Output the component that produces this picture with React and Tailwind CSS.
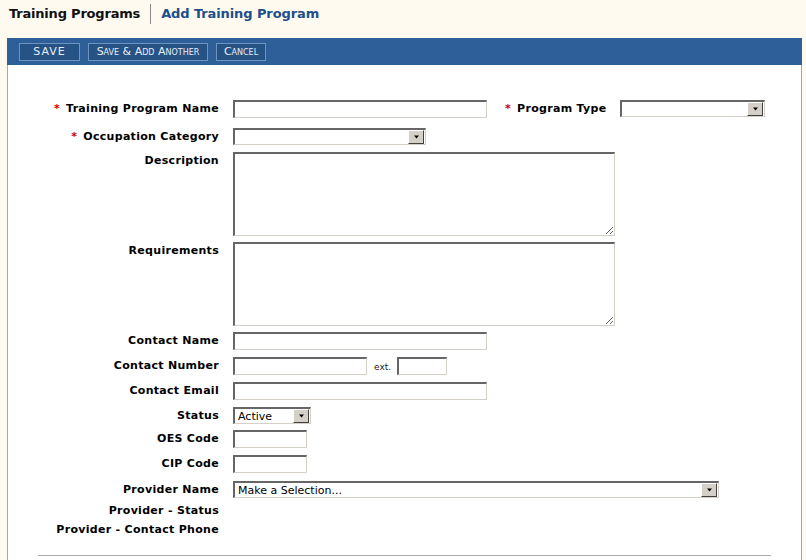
const Box = ({ className = "", children }) => (
  <div
    className={`bg-white border-t-2 border-l-2 border-r border-b border-t-[#666] border-l-[#666] border-r-[#d4d0c8] border-b-[#d4d0c8] ${className}`}
  >
    {children}
  </div>
);

const Select = ({ className = "", value = "" }) => (
  <Box className={`flex items-center h-[17px] ${className}`}>
    <span className="flex-1 pl-[3px] text-[11px] leading-none text-black font-['DejaVu_Sans',Verdana,sans-serif] truncate">
      {value}
    </span>
    <span className="w-[16px] h-[14px] mr-px flex items-center justify-center bg-[#d4d0c8] border border-t-white border-l-white border-r-[#404040] border-b-[#404040]">
      <svg width="7" height="4" viewBox="0 0 7 4">
        <path d="M1 0.5h5L3.5 3.5z" fill="#000" />
      </svg>
    </span>
  </Box>
);

const Label = ({ children, required, className = "" }) => (
  <div className={`w-[212px] pr-px text-right text-[11px] font-bold tracking-[0.3px] text-black leading-[17px] ${className}`}>
    {required && <span className="text-[#cc0000] mr-[6px]">*</span>}
    {children}
  </div>
);

const Row = ({ label, required, labelClass = "", className = "", children }) => (
  <div className={`flex items-start ${className}`}>
    <Label required={required} className={labelClass}>
      {label}
    </Label>
    <div className="ml-[13px] flex items-center">{children}</div>
  </div>
);

export default function App() {
  return (
    <div className="min-h-[560px] h-[560px] overflow-hidden bg-[#fffaef] font-['DejaVu_Sans',Verdana,sans-serif]">
      <div className="h-[38px] flex items-center pl-[9px] pb-[10px]">
        <span className="text-[13px] font-bold text-[#111] tracking-[-0.2px]">Training Programs</span>
        <span className="w-px h-[20px] bg-[#888] ml-[10px] mr-[10px]" />
        <span className="text-[13px] font-bold text-[#1d4f8a] tracking-[-0.1px]">Add Training Program</span>
      </div>

      <div className="ml-[7px] w-[795px]">
        <div className="h-[27px] bg-[#2f5f98] flex items-center pl-[12px] gap-[8px]">
          <div className="w-[61px] flex">
            <button className="w-full h-[18px] border border-[#6d93c0] bg-[#265386] text-[#e8eef6] text-[11px] tracking-[1px] leading-none">
              SAVE
            </button>
          </div>
          <div className="w-[120px] flex">
            <button className="w-full h-[18px] border border-[#6d93c0] bg-[#265386] text-[#e8eef6] text-[11px] [font-variant:small-caps] leading-none">
              Save &amp; Add Another
            </button>
          </div>
          <div className="w-[50px] flex">
            <button className="w-full h-[18px] border border-[#6d93c0] bg-[#265386] text-[#e8eef6] text-[11px] [font-variant:small-caps] leading-none">
              Cancel
            </button>
          </div>
        </div>

        <div className="bg-white border-l border-r border-[#a8a8a8] h-[500px] pt-[35px]">
          <div className="flex items-start">
            <Row label="Training Program Name" required>
              <Box className="w-[254px] h-[18px]" />
            </Row>
            <div className="flex items-start ml-[18px]">
              <div className="text-[11px] font-bold tracking-[0.3px] leading-[17px]">
                <span className="text-[#cc0000] mr-[6px]">*</span>Program Type
              </div>
              <Select className="w-[145px] ml-[14px]" />
            </div>
          </div>

          <Row label="Occupation Category" required className="mt-[10px]">
            <Select className="w-[193px]" />
          </Row>

          <Row label="Description" className="mt-[7px]">
            <textarea className="w-[382px] h-[84px] bg-white border-t-2 border-l-2 border-r border-b border-t-[#666] border-l-[#666] border-r-[#d4d0c8] border-b-[#d4d0c8] outline-none" />
          </Row>

          <Row label="Requirements" className="mt-[6px]">
            <textarea className="w-[382px] h-[84px] bg-white border-t-2 border-l-2 border-r border-b border-t-[#666] border-l-[#666] border-r-[#d4d0c8] border-b-[#d4d0c8] outline-none" />
          </Row>

          <Row label="Contact Name" className="mt-[6px]">
            <Box className="w-[254px] h-[18px]" />
          </Row>

          <Row label="Contact Number" className="mt-[7px]">
            <Box className="w-[134px] h-[18px]" />
            <span className="text-[9px] text-[#222] ml-[7px] mr-[6px] leading-none pt-[3px]">ext.</span>
            <Box className="w-[50px] h-[18px]" />
          </Row>

          <Row label="Contact Email" className="mt-[7px]">
            <Box className="w-[254px] h-[18px]" />
          </Row>

          <Row label="Status" className="mt-[7px]">
            <Select className="w-[78px]" value="Active" />
          </Row>

          <Row label="OES Code" className="mt-[6px]">
            <Box className="w-[74px] h-[18px]" />
          </Row>

          <Row label="CIP Code" className="mt-[7px]">
            <Box className="w-[74px] h-[18px]" />
          </Row>

          <Row label="Provider Name" className="mt-[8px]">
            <Select className="w-[486px]" value="Make a Selection..." />
          </Row>

          <Row label="Provider - Status" className="mt-[4px]" />
          <Row label="Provider - Contact Phone" className="mt-[2px]" />

          <div className="ml-[30px] w-[733px] h-px bg-[#a8a8a8] mt-[17px]" />
        </div>
      </div>
    </div>
  );
}
